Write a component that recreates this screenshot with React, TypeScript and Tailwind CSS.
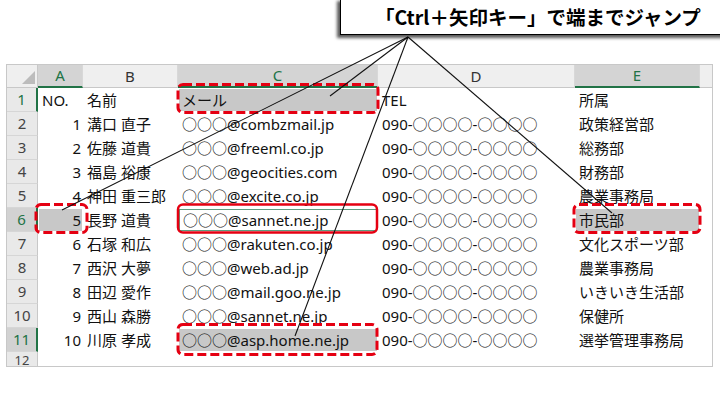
import React from 'react';

type Row = { no: string; name: string; mail: string; tel: string; dept: string };

const rows: Row[] = [
  { no: 'NO.', name: '名前', mail: 'メール', tel: 'TEL', dept: '所属' },
  { no: '1', name: '溝口 直子', mail: '○○○@combzmail.jp', tel: '090-○○○○-○○○○', dept: '政策経営部' },
  { no: '2', name: '佐藤 道貴', mail: '○○○@freeml.co.jp', tel: '090-○○○○-○○○○', dept: '総務部' },
  { no: '3', name: '福島 裕康', mail: '○○○@geocities.com', tel: '090-○○○○-○○○○', dept: '財務部' },
  { no: '4', name: '神田 重三郎', mail: '○○○@excite.co.jp', tel: '090-○○○○-○○○○', dept: '農業事務局' },
  { no: '5', name: '長野 道貴', mail: '○○○@sannet.ne.jp', tel: '090-○○○○-○○○○', dept: '市民部' },
  { no: '6', name: '石塚 和広', mail: '○○○@rakuten.co.jp', tel: '090-○○○○-○○○○', dept: '文化スポーツ部' },
  { no: '7', name: '西沢 大夢', mail: '○○○@web.ad.jp', tel: '090-○○○○-○○○○', dept: '農業事務局' },
  { no: '8', name: '田辺 愛作', mail: '○○○@mail.goo.ne.jp', tel: '090-○○○○-○○○○', dept: 'いきいき生活部' },
  { no: '9', name: '西山 森勝', mail: '○○○@sannet.ne.jp', tel: '090-○○○○-○○○○', dept: '保健所' },
  { no: '10', name: '川原 孝成', mail: '○○○@asp.home.ne.jp', tel: '090-○○○○-○○○○', dept: '選挙管理事務局' },
];

// selected cells: [rowIndex(1-based), column]
const filled = (r: number, c: string) =>
  (r === 1 && c === 'C') || (r === 6 && c === 'A') || (r === 6 && c === 'E') || (r === 11 && c === 'C');

const selectedRows = [1, 6, 11];

const ColHead = ({ label, w, on }: { label: string; w: string; on?: boolean }) => (
  <div
    className={`${w} h-full flex items-center justify-center border-r border-[#d8d8d8] ${
      on ? 'bg-[#d4d4d4] text-[#217346] border-b-2 border-b-[#217346]' : 'bg-[#efefef] text-[#333] border-b border-b-[#c8c8c8]'
    }`}
  >
    {label}
  </div>
);

const Cell = ({ w, fill, right, active, children }: any) => (
  <div className={`${w} h-full p-[1px]`}>
    <div
      className={`h-full flex items-center whitespace-nowrap overflow-visible ${right ? 'justify-end pr-[1px]' : 'pl-[3px]'} ${
        fill ? 'bg-[#c8c8c8]' : ''
      } ${active ? 'border border-[#5f9c80]' : ''}`}
    >
      {children}
    </div>
  </div>
);

export default function App() {
  return (
    <div className="relative w-[720px] h-[405px] bg-white overflow-hidden font-['Noto_Sans','Noto_Sans_CJK_JP',sans-serif] text-[15px] leading-none text-[#111]">
      {/* sheet */}
      <div className="mt-[64px] ml-[6px] w-[707px] h-[303px] border border-[#c8c8c8] overflow-hidden flex flex-col">
        <div className="h-[23px] flex shrink-0">
          <div className="w-[31px] h-full bg-[#efefef] border-r border-b border-[#c8c8c8] relative">
            <div className="absolute right-[2px] bottom-[3px] w-0 h-0 border-l-[13px] border-l-transparent border-b-[13px] border-b-[#bcbcbc]" />
          </div>
          <ColHead label="A" w="w-[45px]" on />
          <ColHead label="B" w="w-[95px]" />
          <ColHead label="C" w="w-[200px]" on />
          <ColHead label="D" w="w-[197px]" />
          <ColHead label="E" w="w-[125px]" on />
          <div className="flex-1 h-full bg-[#efefef] border-b border-b-[#c8c8c8]" />
        </div>

        {rows.map((r, i) => {
          const n = i + 1;
          const sel = selectedRows.includes(n);
          return (
            <div key={n} className="h-[24px] flex shrink-0">
              <div
                className={`w-[31px] h-full flex items-center justify-center border-b border-[#d6d6d6] ${
                  sel ? 'text-[#217346] border-r-2 border-r-[#217346]' : 'text-[#444] border-r border-r-[#c8c8c8]'
                } ${n === 6 || n === 11 ? 'bg-[#d2d2d2]' : 'bg-[#e9e9e9]'}`}
              >
                {n}
              </div>
              <Cell w="w-[45px]" right={n > 1} fill={filled(n, 'A')}>
                {r.no}
              </Cell>
              <Cell w="w-[95px]" fill={filled(n, 'B')}>
                {r.name}
              </Cell>
              <Cell w="w-[200px]" fill={filled(n, 'C')} active={n === 6}>
                {r.mail}
              </Cell>
              <Cell w="w-[197px]" fill={filled(n, 'D')}>
                {r.tel}
              </Cell>
              <Cell w="w-[125px]" fill={filled(n, 'E')}>
                {r.dept}
              </Cell>
              <div className="flex-1" />
            </div>
          );
        })}

        <div className="h-[16px] flex shrink-0">
          <div className="w-[31px] h-full flex items-center justify-center bg-[#e9e9e9] border-r border-[#c8c8c8] text-[#444] text-[13px] leading-[13px]">
            12
          </div>
        </div>
      </div>

      {/* annotations */}
      <svg className="absolute inset-0 pointer-events-none" width="720" height="405">
        <g fill="none" stroke="#e50012" strokeWidth="3" strokeDasharray="9 4">
          <rect x="178" y="84.5" width="200" height="28" rx="5" />
          <rect x="36" y="204.5" width="51" height="28" rx="5" />
          <rect x="574" y="204.5" width="126" height="28" rx="5" />
          <rect x="178" y="324.5" width="199" height="30" rx="5" />
        </g>
        <rect x="178" y="204.5" width="199" height="28" rx="5" fill="none" stroke="#e50012" strokeWidth="2.5" />
        <g stroke="#111" strokeWidth="1.1">
          <line x1="408" y1="37" x2="62" y2="210" />
          <line x1="408" y1="37" x2="330" y2="96" />
          <line x1="408" y1="37" x2="295" y2="336" />
          <line x1="408" y1="37" x2="612" y2="213" />
        </g>
      </svg>

      {/* callout */}
      <div className="absolute left-[340px] top-[-2px] w-[400px] h-[37px] bg-white border border-black shadow-[-3px_3px_3px_rgba(0,0,0,0.65)] flex items-center pl-[34px] font-['Noto_Sans_CJK_JP',sans-serif] font-bold text-[19.5px] text-black">
        「Ctrl＋矢印キー」で端までジャンプ
      </div>
    </div>
  );
}
